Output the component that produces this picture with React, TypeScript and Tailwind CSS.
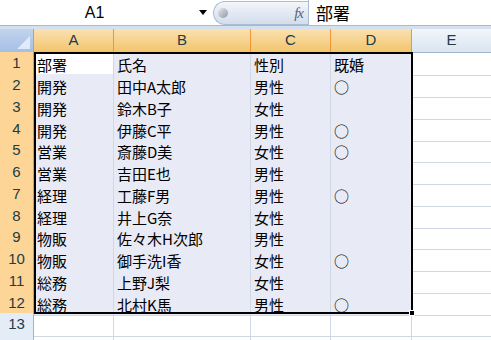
const rows: { dept: string; name: string; sex: string; married: string; h: string }[] = [
  { dept: '部署', name: '氏名', sex: '性別', married: '既婚', h: 'h-[22px]' },
  { dept: '開発', name: '田中A太郎', sex: '男性', married: '○', h: 'h-[22px]' },
  { dept: '開発', name: '鈴木B子', sex: '女性', married: '', h: 'h-[22px]' },
  { dept: '開発', name: '伊藤C平', sex: '男性', married: '○', h: 'h-[21px]' },
  { dept: '営業', name: '斎藤D美', sex: '女性', married: '○', h: 'h-[22px]' },
  { dept: '営業', name: '吉田E也', sex: '男性', married: '', h: 'h-[22px]' },
  { dept: '経理', name: '工藤F男', sex: '男性', married: '○', h: 'h-[22px]' },
  { dept: '経理', name: '井上G奈', sex: '女性', married: '', h: 'h-[21px]' },
  { dept: '物販', name: '佐々木H次郎', sex: '男性', married: '', h: 'h-[22px]' },
  { dept: '物販', name: '御手洗I香', sex: '女性', married: '○', h: 'h-[22px]' },
  { dept: '総務', name: '上野J梨', sex: '女性', married: '', h: 'h-[22px]' },
  { dept: '総務', name: '北村K馬', sex: '男性', married: '○', h: 'h-[21px]' },
];

const font = "font-['Liberation_Sans','Noto_Sans_CJK_JP',sans-serif]";
const cjk = "font-['Noto_Sans_CJK_JP',sans-serif]";
const cols = 'grid grid-cols-[34px_80px_137px_80px_81px_1fr]';

function Cell({ text, active }: { text: string; active?: boolean }) {
  return (
    <div
      className={`flex items-center pl-[3px] pt-[2px] border-r border-b border-[#d0d7e5] text-[15px] text-black leading-none overflow-hidden whitespace-nowrap ${cjk} ${
        active ? 'bg-white' : 'bg-[#e8eaf5]'
      }`}
    >
      {text}
    </div>
  );
}

export default function App() {
  return (
    <div className={`w-[491px] h-[340px] overflow-hidden bg-white ${font}`}>
      {/* formula bar */}
      <div className="flex h-[26px] border-b border-[#a5b9d2] bg-white">
        <div className="w-[213px] flex items-center">
          <span className="flex-1 text-center text-[16px] text-black pr-[10px]">A1</span>
          <span className="w-0 h-0 mr-[6px] border-l-[4px] border-r-[4px] border-t-[5px] border-l-transparent border-r-transparent border-t-black" />
        </div>
        <div className="w-[95px] mt-[1px] flex items-center rounded-l-full border border-r-0 border-[#a9bcd6] bg-gradient-to-b from-[#f4f7fb] via-[#e2e9f3] to-[#d3deeb] pl-[4px]">
          <span className="w-[10px] h-[10px] rounded-full bg-gradient-to-br from-[#e8e8e8] to-[#8f9aa6]" />
          <span className="ml-auto mr-[5px] text-[15px] italic font-['Liberation_Serif',serif] text-[#5a6470] tracking-[-1px]">fx</span>
        </div>
        <div className={`flex-1 flex items-center pl-[7px] border-l border-[#a9bcd6] text-[17px] text-black ${cjk}`}>
          部署
        </div>
      </div>
      <div className="h-[3px] bg-[#d5e0ee]" />

      {/* column headers */}
      <div className={`${cols} h-[23px]`}>
        <div className="relative bg-gradient-to-b from-[#c2d4ee] to-[#a5bfe6] border-r border-b border-[#8fa9cf]">
          <div className="absolute right-[3px] bottom-[3px] w-0 h-0 border-l-[13px] border-t-[13px] border-l-transparent border-t-transparent border-b-0 border-r-[13px] border-r-[#eef3fb] opacity-80 border-b-transparent" />
        </div>
        {['A', 'B', 'C', 'D'].map((c) => (
          <div
            key={c}
            className="flex items-center justify-center text-[15px] text-[#203c45] bg-gradient-to-b from-[#fae1b0] to-[#f2c46c] border-r border-b border-[#f29536]"
          >
            {c}
          </div>
        ))}
        <div className="flex items-center justify-center text-[15px] text-[#203c45] bg-gradient-to-b from-[#f2f6fb] to-[#dbe4f0] border-b border-[#9eb6ce]">
          E
        </div>
      </div>

      {/* sheet body */}
      <div className="relative">
        {rows.map((r, i) => (
          <div key={i} className={`${cols} ${r.h}`}>
            <div className="flex items-center justify-center text-[15px] text-[#203c45] bg-[#fdd597] border-r border-b border-[#f29536]">
              {i + 1}
            </div>
            <Cell text={r.dept} active={i === 0} />
            <Cell text={r.name} />
            <Cell text={r.sex} />
            <Cell text={r.married} />
            <div className="border-b border-[#d0d7e5]" />
          </div>
        ))}
        <div className={`${cols} h-[22px]`}>
          <div className="flex items-center justify-center text-[15px] text-[#203c45] bg-[#e4ecf7] border-r border-b border-[#9eb6ce]">
            13
          </div>
          <div className="border-r border-b border-[#d0d7e5]" />
          <div className="border-r border-b border-[#d0d7e5]" />
          <div className="border-r border-b border-[#d0d7e5]" />
          <div className="border-r border-b border-[#d0d7e5]" />
          <div className="border-b border-[#d0d7e5]" />
        </div>
        <div className={`${cols} h-[22px]`}>
          <div className="bg-[#e4ecf7] border-r border-[#9eb6ce]" />
          <div className="border-r border-[#d0d7e5]" />
          <div className="border-r border-[#d0d7e5]" />
          <div className="border-r border-[#d0d7e5]" />
          <div className="border-r border-[#d0d7e5]" />
          <div />
        </div>

        {/* selection outline */}
        <div className="absolute left-[34px] top-0 w-[379px] h-[262px] border-2 border-black pointer-events-none" />
        <div className="absolute left-[409px] top-[258px] w-[6px] h-[6px] bg-black border border-white" />
      </div>
    </div>
  );
}
